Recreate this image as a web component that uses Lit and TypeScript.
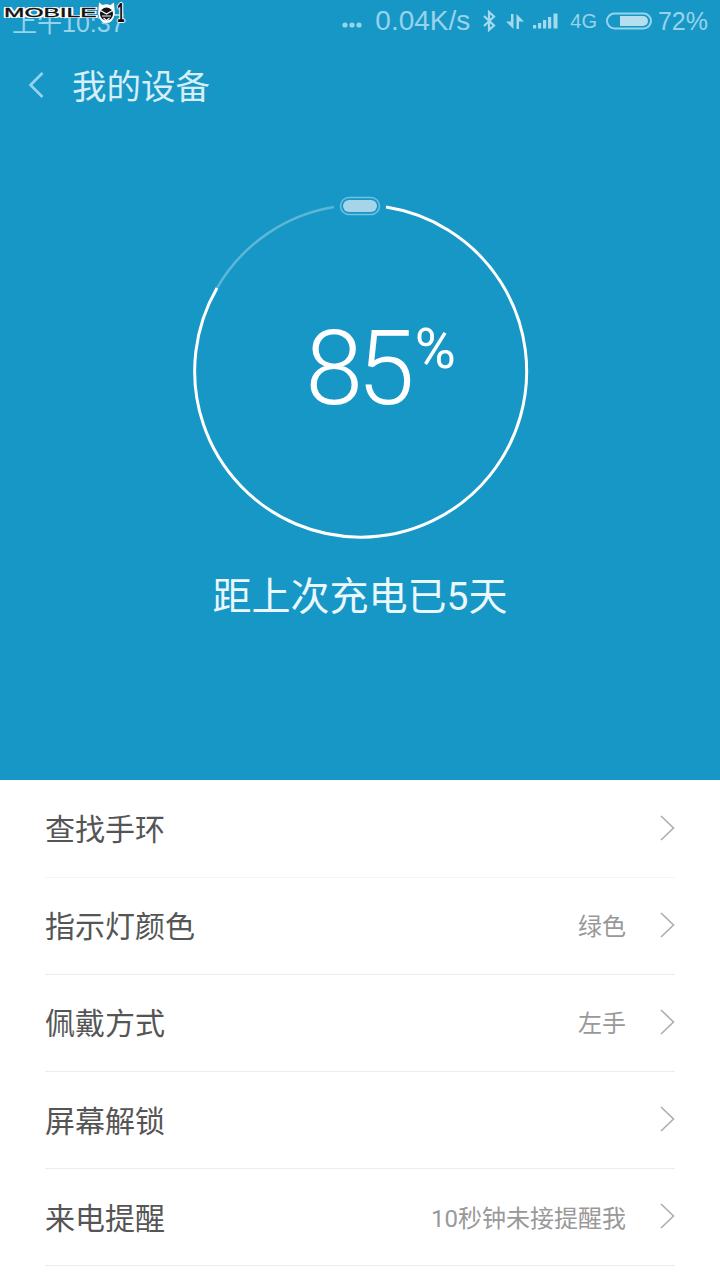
import { LitElement, html, css } from "lit";
import { customElement } from "lit/decorators.js";

const rows = [
  { label: "查找手环", value: "" },
  { label: "指示灯颜色", value: "绿色" },
  { label: "佩戴方式", value: "左手" },
  { label: "屏幕解锁", value: "" },
  { label: "来电提醒", value: "10秒钟未接提醒我" },
];

@customElement("app-root")
export class AppRoot extends LitElement {
  static styles = css`
    :host {
      display: block;
      position: relative;
      width: 720px;
      height: 1280px;
      overflow: hidden;
      background: #fff;
      font-family: "Roboto", "Noto Sans CJK SC", sans-serif;
    }

    .hero {
      height: 780px;
      background: #1797c6;
      display: flex;
      flex-direction: column;
    }

    .status {
      height: 40px;
      display: flex;
      align-items: center;
      justify-content: space-between;
      padding: 2px 12px 0 12px;
      box-sizing: border-box;
      color: #97d3ea;
      font-size: 28px;
      font-family: "Liberation Sans", "Noto Sans CJK SC", sans-serif;
    }

    .time {
      font-size: 25px;
    }

    .status-right {
      display: flex;
      align-items: center;
    }

    .dots {
      margin: 8px 13px 0 0;
    }

    .speed {
      margin-right: 12px;
    }

    .arrows {
      margin: 0 9px 0 10px;
    }

    .net {
      font-size: 20px;
      margin: 0 9px 0 12px;
    }

    .level {
      font-size: 25px;
      margin-left: 6px;
    }

    .logo {
      position: absolute;
      left: 4px;
      top: 1px;
      display: flex;
      align-items: center;
      height: 24px;
    }

    .logo-word {
      font: 12px/14px "Liberation Sans", sans-serif;
      color: #111;
      -webkit-text-stroke: 0.3px #111;
      width: 46px;
      white-space: nowrap;
      transform: scaleX(2.04);
      transform-origin: left center;
      margin-right: 48px;
      text-shadow: 1px 0 0 #fff, -1px 0 0 #fff, 0 1px 0 #fff, 0 -1px 0 #fff,
        1px 1px 0 #fff, -1px -1px 0 #fff, 1px -1px 0 #fff, -1px 1px 0 #fff;
    }

    .logo-one {
      font: bold 27px/22px "Liberation Sans", sans-serif;
      color: #111;
      margin-left: 2px;
      transform: scaleX(0.5);
      transform-origin: left center;
      text-shadow: 2px 0 0 #fff, -2px 0 0 #fff, 0 1px 0 #fff, 0 -1px 0 #fff;
    }

    .header {
      height: 92px;
      display: flex;
      align-items: center;
      padding: 0 0 2px 28px;
      color: #d5eef8;
      font-size: 34.5px;
      box-sizing: border-box;
    }

    .header svg {
      margin-right: 28px;
    }

    .header span {
      margin-top: -3px;
    }

    .ring {
      margin: 59px auto 0 auto;
      width: 360px;
      height: 360px;
      display: grid;
    }

    .ring > * {
      grid-area: 1 / 1;
    }

    .reading {
      display: flex;
      align-items: flex-start;
      justify-content: center;
      padding: 122px 0 0 41px;
      color: #fff;
    }

    .num {
      font-size: 104px;
      line-height: 112px;
      font-family: "Roboto", sans-serif;
      font-weight: 300;
      letter-spacing: -6px;
    }

    .pct {
      font-size: 56px;
      line-height: 56px;
      font-family: "Roboto", sans-serif;
      font-weight: 400;
      margin: 8px 0 0 6px;
    }

    .caption {
      margin-top: 24px;
      text-align: center;
      color: #eaf7fc;
      font-size: 39px;
      line-height: 44px;
    }

    .list {
      padding: 0.5px 45px 0 45px;
    }

    .row {
      height: 97.2px;
      padding-bottom: 2px;
      box-sizing: border-box;
      display: flex;
      align-items: center;
      border-bottom: 1px solid #ececec;
      font-size: 30px;
      color: #555;
    }

    .row:first-child {
      border-bottom-color: #f5f5f5;
    }

    .label {
      flex: 1;
      margin-top: -1px;
    }

    .value {
      font-size: 24px;
      color: #999;
      margin: 0 33px 0 0;
    }
  `;

  renderChevron() {
    return html`<svg width="16" height="28" viewBox="0 0 16 28" fill="none">
      <path d="M2 2 L14.5 14 L2 26" stroke="#adadad" stroke-width="1.6" />
    </svg>`;
  }

  render() {
    return html`
      <div class="hero">
        <div class="status">
          <span class="time">上午10:37</span>
          <div class="status-right">
            <svg class="dots" width="20" height="6" viewBox="0 0 20 6" fill="#97d3ea">
              <circle cx="3" cy="3" r="2.6" /><circle cx="10" cy="3" r="2.6" /><circle cx="17" cy="3" r="2.6" />
            </svg>
            <span class="speed">0.04K/s</span>
            <svg width="14" height="22" viewBox="0 0 14 22" fill="none" stroke="#a5d9ed" stroke-width="2.2">
              <path d="M2 6 L12 15.5 L7 20 V2 L12 6.5 L2 16" />
            </svg>
            <svg class="arrows" width="18" height="17" viewBox="0 0 18 17" fill="#a5d9ed">
              <path d="M5 1 H7.5 V16 L0 8.5 H5 Z" />
              <path d="M10.5 16 V1 L18 8.5 H13 V16 Z" />
            </svg>
            <svg width="25" height="16" viewBox="0 0 25 16" fill="#a5d9ed">
              <rect x="0" y="12" width="3.2" height="3.5" />
              <rect x="5" y="10" width="3.2" height="5.5" />
              <rect x="10" y="7" width="3.2" height="8.5" />
              <rect x="15" y="4" width="3.2" height="11.5" />
              <rect x="20.5" y="0.5" width="4" height="15" />
            </svg>
            <span class="net">4G</span>
            <svg width="46" height="18" viewBox="0 0 46 18" fill="none">
              <rect x="1" y="1.5" width="44" height="15" rx="7.5" stroke="#97d3ea" stroke-width="2" />
              <path d="M14 4 H37 a5 5 0 0 1 0 10 H14 Z" fill="#b5deef" />
            </svg>
            <span class="level">72%</span>
          </div>
        </div>
        <div class="header">
          <svg width="16" height="28" viewBox="0 0 16 28" fill="none">
            <path d="M14.5 2 L2.5 14 L14.5 26" stroke="#97d3ea" stroke-width="2.6" />
          </svg>
          <span>我的设备</span>
        </div>
        <div class="ring">
          <svg width="360" height="360" viewBox="0 0 360 360" fill="none">
            <path d="M206 16.1 A166 166 0 1 1 37 97" stroke="#fff" stroke-width="3" />
            <path d="M37 97 A166 166 0 0 1 154 16.1" stroke="#fff" stroke-opacity="0.3" stroke-width="2.5" />
            <rect x="160.5" y="6.5" width="39" height="17" rx="8.5" stroke="#73bfdd" stroke-width="1.5" />
            <rect x="163" y="9" width="34" height="12" rx="6" fill="#a6d4e9" />
          </svg>
          <div class="reading">
            <span class="num">85</span>
            <span class="pct">%</span>
          </div>
        </div>
        <div class="caption">距上次充电已5天</div>
      </div>
      <div class="list">
        ${rows.map(
          (r) => html`
            <div class="row">
              <span class="label">${r.label}</span>
              ${r.value ? html`<span class="value">${r.value}</span>` : ""}
              ${this.renderChevron()}
            </div>
          `
        )}
      </div>
      <div class="logo">
        <span class="logo-word">MOBILE</span>
        <svg width="17" height="22" viewBox="0 0 17 22">
          <path d="M1 0.5 L4.5 3 Q8.5 1.5 12.5 3 L16 0.5 L16.5 7 Q17 9 16.8 12 Q15 21 8.5 21 Q2 21 0.2 12 Q0 9 0.5 7 Z" fill="#fff" />
          <circle cx="8.5" cy="12" r="6.5" fill="#111" />
          <path d="M2.5 8.5 L8.5 12 L14.5 8.5 M4 14 H13 M5.5 16 L8.5 18.5 L11.5 16" fill="none" stroke="#fff" stroke-width="1.2" />
        </svg>
        <span class="logo-one">1</span>
      </div>
    `;
  }
}
